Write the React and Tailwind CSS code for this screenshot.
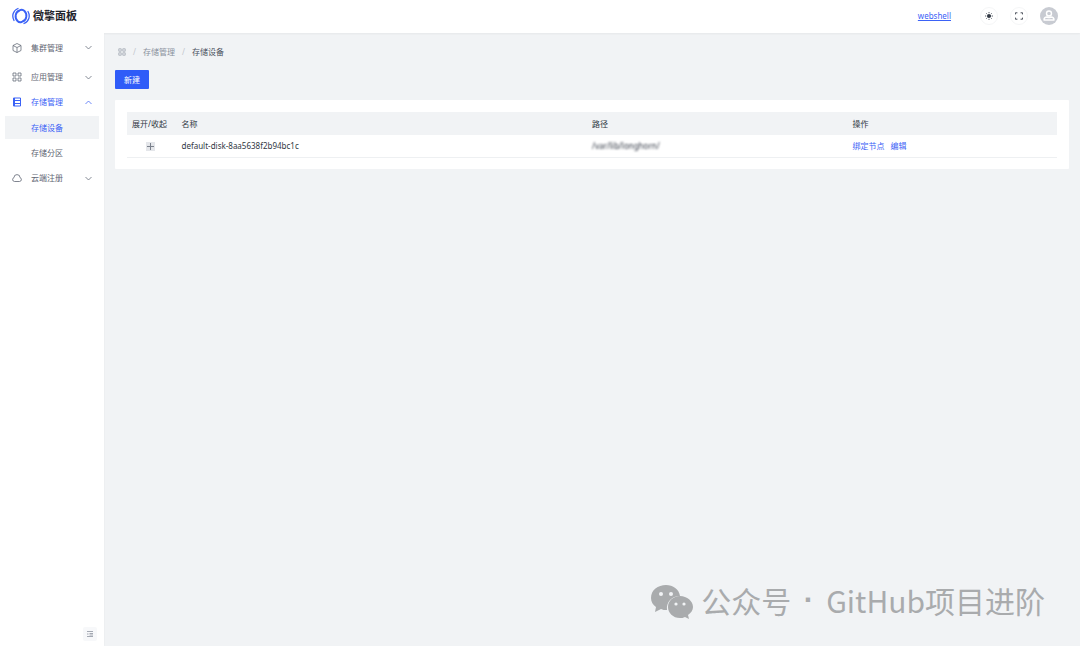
import { useState } from 'react';

const menu = [
  { id: 'cluster', label: '集群管理', icon: CubeIcon, height: 'h-[29px]' },
  { id: 'app', label: '应用管理', icon: GridIcon, height: 'h-[30px]' },
  {
    id: 'storage',
    label: '存储管理',
    icon: StorageIcon,
    height: 'h-5',
    children: ['存储设备', '存储分区'],
  },
  { id: 'cloud', label: '云端注册', icon: CloudIcon, height: 'h-6' },
];

const disks = [
  { name: 'default-disk-8aa5638f2b94bc1c', path: '/var/lib/longhorn/' },
];

function Logo() {
  return (
    <svg viewBox="0 0 36 36" className="size-[18px]" fill="none" stroke="#3b62f6" strokeLinecap="round" aria-hidden="true">
      <path d="M12 3C2 7-1 18 4 27" strokeWidth="2.6" />
      <path d="M15 7C6 10 5 22 11 28c2 2 5 3 8 2" strokeWidth="3.8" />
      <path d="M24 33c10-4 13-15 8-24" strokeWidth="2.6" />
      <path d="M21 29c9-3 10-15 4-21-2-2-5-3-8-2" strokeWidth="3.8" />
    </svg>
  );
}

function CubeIcon() {
  return (
    <svg viewBox="0 0 20 20" className="size-[10px]" fill="none" stroke="currentColor" strokeWidth="1.5" strokeLinejoin="round" aria-hidden="true">
      <path d="M10 1l8 4v10l-8 4-8-4V5z" />
      <path d="M2 5l8 4 8-4M10 9v10" />
    </svg>
  );
}

function GridIcon() {
  return (
    <svg viewBox="0 0 20 20" className="size-full" fill="none" stroke="currentColor" strokeWidth="1.5" aria-hidden="true">
      <path d="M2 2h6v6H2zM12 2h6v6h-6zM2 12h6v6H2zM12 12h6v6h-6z" />
    </svg>
  );
}

function StorageIcon() {
  return (
    <svg viewBox="0 0 20 20" className="size-[10px]" fill="none" stroke="currentColor" strokeWidth="2" aria-hidden="true">
      <path d="M3 2h14v16H3zM3 7h14M3 13h14M5 2v16" />
    </svg>
  );
}

function CloudIcon() {
  return (
    <svg viewBox="0 0 20 20" className="size-[10px]" fill="none" stroke="currentColor" strokeWidth="1.6" aria-hidden="true">
      <path d="M5 17h10a4 4 0 0 0 1-7.8 6 6 0 0 0-12 0A4 4 0 0 0 5 17z" />
    </svg>
  );
}

function Chevron({ open }) {
  return (
    <svg viewBox="0 0 14 14" className="size-[7px]" fill="none" stroke="currentColor" strokeWidth="1.5" aria-hidden="true">
      <path d={open ? 'M1 10l6-6 6 6' : 'M1 4l6 6 6-6'} />
    </svg>
  );
}

function SunIcon() {
  return (
    <svg viewBox="0 0 20 20" className="size-2" stroke="#303743" strokeWidth="2" strokeLinecap="round" aria-hidden="true">
      <circle cx="10" cy="10" r="4" fill="#303743" />
      <path d="M10 1v1M10 18v1M1 10h1M18 10h1M4 4l1 1M15 15l1 1M16 4l-1 1M5 15l-1 1" />
    </svg>
  );
}

function FullscreenIcon() {
  return (
    <svg viewBox="0 0 20 20" className="size-2" fill="none" stroke="#303743" strokeWidth="2.2" aria-hidden="true">
      <path d="M1 6V2h5M14 2h5v4M19 14v4h-5M6 18H1v-4" />
    </svg>
  );
}

function Avatar() {
  return (
    <svg viewBox="0 0 36 36" className="size-[18px]" fill="none" stroke="#fff" strokeWidth="2.8" aria-hidden="true">
      <circle cx="18" cy="18" r="18" fill="#c8cbd2" stroke="none" />
      <circle cx="18" cy="13" r="5" />
      <path d="M8 26c0-4 3-6 6-6 2 1 6 1 8 0 3 0 6 2 6 6z" strokeLinejoin="round" />
    </svg>
  );
}

function WechatIcon() {
  return (
    <svg viewBox="0 0 42 36" className="h-9 w-[42px]" fill="#a9abad" aria-hidden="true">
      <path d="M15 1C7 1 0 6 0 14c0 4 2 7 5 9l-1 5 6-3c2 1 3 1 6 1-1-8 5-14 13-14C28 5 22 1 15 1z" />
      <path d="M29 12c-7 0-12 5-12 11s5 11 12 11c2 0 3 0 5-1l4 2-1-4c3-2 5-5 5-8 0-6-6-11-13-11z" />
      <g fill="#f1f3f5">
        <circle cx="10" cy="10" r="2" />
        <circle cx="20" cy="10" r="2" />
        <circle cx="25" cy="20" r="1.6" />
        <circle cx="33" cy="20" r="1.6" />
      </g>
    </svg>
  );
}

function Sidebar() {
  const [opened, setOpened] = useState('storage');
  const [current, setCurrent] = useState('存储设备');

  return (
    <aside className="flex w-26 shrink-0 flex-col bg-white shadow-xs">
      <nav className="px-[5px]">
        {menu.map(({ id, label, icon: Icon, height, children }) => {
          const open = opened === id;
          return (
            <div key={id}>
              <button
                type="button"
                aria-expanded={open}
                onClick={() => setOpened(open ? '' : id)}
                className={`flex w-full items-center pr-[7px] pl-[7px] ${height} ${open ? 'text-[#3b62f6]' : 'text-[#5f6673]'}`}
              >
                <span className="size-[10px]"><Icon /></span>
                <span className="ml-[9px] flex-1 text-left">{label}</span>
                <Chevron open={open} />
              </button>
              {open && children && (
                <ul className="pt-1">
                  {children.map((item) => (
                    <li key={item}>
                      <a
                        href="#"
                        onClick={() => setCurrent(item)}
                        className={`mb-[2px] flex h-[23px] items-center pl-[26px] ${current === item ? 'bg-[#f1f3f5] text-[#3b62f6]' : 'text-[#5f6673]'}`}
                      >
                        {item}
                      </a>
                    </li>
                  ))}
                </ul>
              )}
            </div>
          );
        })}
      </nav>
      <button type="button" aria-label="收起菜单" className="mt-auto mr-[7px] mb-[5px] flex size-[14px] items-center justify-center self-end rounded-xs bg-[#f7f8fa] text-[#a4a9b3]">
        <svg viewBox="0 0 12 12" className="size-[6px]" fill="none" stroke="currentColor" strokeWidth="2" aria-hidden="true">
          <path d="M0 1h12M5 5h7M5 8h7M0 11h12M0 6h3" />
        </svg>
      </button>
    </aside>
  );
}

export default function App() {
  return (
    <div className="flex min-h-screen flex-col bg-[#f1f3f5] font-['Noto_Sans','Noto_Sans_CJK_SC',sans-serif] text-[8px] leading-3 text-[#303743]">
      {/* Header */}
      <header className="flex h-[33px] items-center bg-white pr-[22px] pb-px pl-3 shadow-xs">
        <Logo />
        <h1 className="ml-[3px] flex-1 text-[11px] leading-4 font-bold text-[#1f242c]">微擎面板</h1>
        <a href="#" className="mr-[29px] text-[#3b62f6] underline">webshell</a>
        <button type="button" aria-label="切换主题" className="mr-3 flex size-[18px] items-center justify-center rounded-full border border-[#f5f6f7]">
          <SunIcon />
        </button>
        <button type="button" aria-label="全屏" className="mr-3 flex size-[18px] items-center justify-center rounded-full border border-[#f5f6f7]">
          <FullscreenIcon />
        </button>
        <button type="button" aria-label="用户">
          <Avatar />
        </button>
      </header>

      <div className="flex flex-1">
        <Sidebar />

        {/* Main Content */}
        <main className="flex min-w-0 flex-1 flex-col px-[11px] pt-[13px]">
          <nav className="flex items-center pl-[3px] text-[#8a919d]">
            <span className="size-2"><GridIcon /></span>
            <span className="mx-[7px] text-[#c3c7ce]">/</span>
            <a href="#">存储管理</a>
            <span className="mx-[7px] text-[#c3c7ce]">/</span>
            <span className="text-[#4a515d]">存储设备</span>
          </nav>

          <button type="button" className="mt-3 h-[19px] w-[34px] rounded-[1px] bg-[#2f5cf8] text-white">新建</button>

          <section className="mt-[11px] rounded-[1px] bg-white px-3 pt-3 pb-[11px]">
            <table className="w-full table-fixed text-left">
              <thead>
                <tr className="h-[23px] bg-[#f1f3f5]">
                  <th className="w-[5%] pl-[5px] font-normal whitespace-nowrap">展开/收起</th>
                  <th className="w-[45%] pl-2 font-normal">名称</th>
                  <th className="w-[28%] font-normal">路径</th>
                  <th className="w-[22%] font-normal">操作</th>
                </tr>
              </thead>
              <tbody>
                {disks.map((disk) => (
                  <tr key={disk.name} className="h-[22px] border-b border-[#eef0f2]">
                    <td className="text-center">
                      <button type="button" aria-label="展开" className="inline-flex size-[9px] items-center justify-center bg-[#e4e6ea] align-middle">
                        <svg viewBox="0 0 7 7" className="size-[7px]" stroke="#7b818c" aria-hidden="true">
                          <path d="M3.5 0v7M0 3.5h7" />
                        </svg>
                      </button>
                    </td>
                    <td className="pl-2">{disk.name}</td>
                    <td><span className="blur-[1px]">{disk.path}</span></td>
                    <td className="text-[#3b62f6]">
                      <div className="flex gap-[6px]">
                        <a href="#">绑定节点</a>
                        <a href="#">编辑</a>
                      </div>
                    </td>
                  </tr>
                ))}
              </tbody>
            </table>
          </section>

          <footer className="mt-auto mr-6 mb-[26px] flex items-end justify-end font-['Noto_Sans_CJK_SC',sans-serif] text-[30px] leading-10 text-[#a9abad]">
            <WechatIcon />
            <span className="ml-2">公众号</span>
            <span className="w-[35px] text-center font-['Liberation_Sans'] font-bold">·</span>
            <span>GitHub项目进阶</span>
          </footer>
        </main>
      </div>
    </div>
  );
}
